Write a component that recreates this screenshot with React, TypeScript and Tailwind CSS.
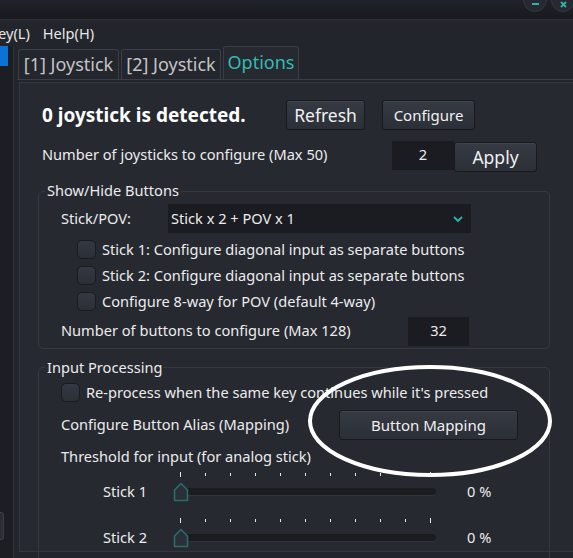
import React from 'react';

const font = { fontFamily: '"Noto Sans", "Open Sans", sans-serif' };

function Btn({ label, className }: { label: string; className: string }) {
  return (
    <div
      className={`flex items-center justify-center rounded-[3px] border border-[#17191d] bg-gradient-to-b from-[#363a43] to-[#2b2f36] text-[#f0f0f0] shadow-[inset_0_1px_0_rgba(255,255,255,0.06)] ${className}`}
    >
      {label}
    </div>
  );
}

function Check({ label, className = '' }: { label: string; className?: string }) {
  return (
    <div className={`flex items-center gap-[6px] ${className}`}>
      <div className="h-[19px] w-[19px] rounded-[5px] border border-[#191b1f] bg-gradient-to-b from-[#343842] to-[#2b2f36]" />
      <span>{label}</span>
    </div>
  );
}

function Handle() {
  return (
    <svg width="16" height="20" viewBox="0 0 16 20" className="absolute left-[-7px] top-[-6px]">
      <path d="M1.5 18.5 V8 L8 1.5 L14.5 8 V18.5 Z" fill="#2a3037" stroke="#2d6b6d" strokeWidth="1.6" strokeLinejoin="round" />
    </svg>
  );
}

function Slider({ label }: { label: string }) {
  const ticks = Array.from({ length: 11 }, (_, i) => i);
  return (
    <div className="flex flex-col">
      <div className="relative ml-[180px] h-[6px] w-[256px]">
        {ticks.map((i) => (
          <div
            key={i}
            className={`absolute w-[1px] bg-[#e8e8e8] ${i === 0 || i === 10 ? 'top-0 h-[5px]' : 'top-[1px] h-[3px]'}`}
            style={{ left: i * 25 }}
          />
        ))}
      </div>
      <div className="mt-[3px] flex items-center">
        <span className="ml-[103px] w-[77px]">{label}</span>
        <div className="relative h-[7px] w-[256px] rounded-full bg-[#1a1c20] shadow-[0_1px_0_#30343c]">
          <Handle />
        </div>
        <span className="ml-[31px]">0 %</span>
      </div>
    </div>
  );
}

export default function App() {
  return (
    <div className="relative h-[558px] w-[573px] overflow-hidden bg-[#22252c] text-[14.6px] text-[#ececec]" style={font}>
      {/* title bar */}
      <div className="flex h-[20px] justify-end gap-[4px] border-b border-[#2e3138] bg-gradient-to-b from-[#1f2229] to-[#181a1f]">
        <div className="mt-[-12px] flex h-[24px] w-[24px] items-center justify-center rounded-full border border-[#33373f] bg-[#262930] pt-[8px]">
          <div className="h-[2px] w-[7px] bg-[#2bb3ad]" />
        </div>
        <div className="mr-[-2px] mt-[-12px] flex h-[24px] w-[24px] items-center justify-center rounded-full border border-[#33373f] bg-[#262930] pt-[8px]">
          <svg width="7" height="7" viewBox="0 0 7 7">
            <path d="M1 1 L6 6 M6 1 L1 6" stroke="#2bb3ad" strokeWidth="1.8" />
          </svg>
        </div>
      </div>

      {/* menu bar */}
      <div className="flex h-[26px] items-center gap-[13px] pt-[1px] text-[14.6px] leading-none text-[#e6e6e6]">
        <span className="ml-[-2px]">ey(L)</span>
        <span>Help(H)</span>
      </div>

      <div className="flex">
        {/* left panel */}
        <div className="flex h-[512px] w-[14px] flex-col border-r border-[#30333a] bg-[#1c1e23]">
          <div className="h-[20px] w-[8px] bg-[#0b73d5]" />
          <div className="flex-1" />
          <div className="mb-[18px] h-[28px] w-[4px] rounded-r-[3px] border border-l-0 border-[#3a3e46] bg-[#2a2d34]" />
        </div>

        <div className="flex flex-1 flex-col pl-[3px]">
          {/* tabs */}
          <div className="flex h-[33px] items-end gap-[2px] pl-[1px]">
            <div className="flex h-[30px] w-[101px] items-center justify-center rounded-t-[3px] border border-b-0 border-[#3a3e46] bg-[#23262d] text-[18px] text-[#c4c4c4]">
              [1] Joystick
            </div>
            <div className="flex h-[30px] w-[100px] items-center justify-center rounded-t-[3px] border border-b-0 border-[#3a3e46] bg-[#23262d] text-[18px] text-[#c4c4c4]">
              [2] Joystick
            </div>
            <div className="flex h-[33px] w-[76px] items-center justify-center rounded-t-[3px] border border-b-0 border-[#3a3e46] bg-[#262930] pb-[1px] text-[18px] text-[#37b9b3]">
              Options
            </div>
          </div>

          {/* content pane */}
          <div className="h-[474px] border-t border-[#3a3e46] pl-[2px] pt-[2px]">
            <div className="h-[470px] border border-r-0 border-[#34373f] bg-[#262930] pl-[22px] pt-[17px]">
              <div className="flex items-center">
                <span className="w-[244px] text-[19px] font-bold text-white">0 joystick is detected.</span>
                <Btn label="Refresh" className="h-[30px] w-[79px] text-[17.5px]" />
                <Btn label="Configure" className="ml-[17px] h-[30px] w-[93px] text-[15px]" />
              </div>
              <div className="mt-[8px] flex items-center">
                <span className="w-[350px]">Number of joysticks to configure (Max 50)</span>
                <div className="flex h-[29px] w-[62px] items-center justify-center bg-[#1a1c21]">2</div>
                <Btn label="Apply" className="mt-[4px] h-[30px] w-[83px] text-[17.5px]" />
              </div>

              {/* Show/Hide Buttons */}
              <div className="relative ml-[-4px] mt-[19px] h-[158px] w-[512px] rounded-[5px] border border-[#363940] pl-[22px] pt-[12px]">
                <span className="absolute left-[6px] top-[-12px] bg-[#262930] px-[2px] leading-[20px]">Show/Hide Buttons</span>
                <div className="flex items-center">
                  <span className="w-[107px]">Stick/POV:</span>
                  <div className="flex h-[29px] w-[303px] items-center justify-between bg-[#1a1c21] pl-[3px] pr-[8px]">
                    <span>Stick x 2 + POV x 1</span>
                    <svg width="10" height="6" viewBox="0 0 10 6">
                      <path d="M1 1 L5 5 L9 1" fill="none" stroke="#2bb3ad" strokeWidth="1.8" />
                    </svg>
                  </div>
                </div>
                <Check className="ml-[16px] mt-[6px]" label="Stick 1: Configure diagonal input as separate buttons" />
                <Check className="ml-[16px] mt-[4px]" label="Stick 2: Configure diagonal input as separate buttons" />
                <Check className="ml-[16px] mt-[4px]" label="Configure 8-way for POV (default 4-way)" />
                <div className="mt-[4px] flex items-center">
                  <span className="w-[347px]">Number of buttons to configure (Max 128)</span>
                  <div className="flex h-[29px] w-[61px] items-center justify-center bg-[#1a1c21]">32</div>
                </div>
              </div>

              {/* Input Processing */}
              <div className="relative ml-[-4px] mt-[18px] h-[200px] w-[512px] rounded-[5px] border border-b-0 border-[#363940] pl-[22px] pt-[14px]">
                <span className="absolute left-[6px] top-[-11px] bg-[#262930] px-[2px] leading-[20px]">Input Processing</span>
                <Check label="Re-process when the same key continues while it's pressed" />
                <div className="mt-[6px] flex items-center">
                  <span className="w-[278px]">Configure Button Alias (Mapping)</span>
                  <Btn label="Button Mapping" className="h-[30px] w-[179px] text-[15px]" />
                </div>
                <div className="mt-[6px]">Threshold for input (for analog stick)</div>
                <div className="ml-[-61px] mt-[4px]">
                  <Slider label="Stick 1" />
                  <div className="mt-[15px]">
                    <Slider label="Stick 2" />
                  </div>
                </div>
              </div>
            </div>
          </div>
        </div>
      </div>

      {/* annotation ellipse */}
      <svg className="pointer-events-none absolute left-0 top-0" width="573" height="558">
        <ellipse cx="430" cy="421" rx="120" ry="54" fill="none" stroke="#ffffff" strokeWidth="4" />
      </svg>
    </div>
  );
}
